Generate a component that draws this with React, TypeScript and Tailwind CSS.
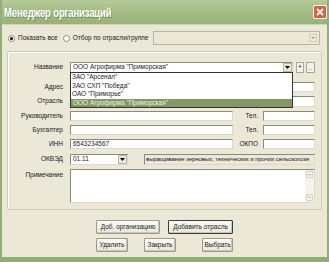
import React from "react";

const inp =
  "bg-white border border-t-[#8c8a80] border-l-[#8c8a80] border-r-[#dcd9cb] border-b-[#dcd9cb]";

function Arrow() {
  return (
    <div className="w-[9px] h-full bg-[#ece9d8] border border-[#b8b5a6] flex items-center justify-center">
      <svg width="5" height="3" viewBox="0 0 5 3">
        <path d="M0 0 H5 L2.5 3 Z" fill="#000" />
      </svg>
    </div>
  );
}

function Label({ children, w = "w-[55px]" }: { children: React.ReactNode; w?: string }) {
  return <div className={`${w} text-right shrink-0 leading-none`}>{children}</div>;
}

function Btn({ children, w, def }: { children: React.ReactNode; w: string; def?: boolean }) {
  return (
    <div
      className={`${w} h-[14px] flex items-center justify-center bg-gradient-to-b from-[#fbfaf6] to-[#e9e6da] rounded-[1px] ${
        def ? "border border-[#3c3c3c]" : "border border-[#9d9a8a]"
      } shadow-[inset_-1px_-1px_0_#c9c6b6]`}
    >
      {children}
    </div>
  );
}

export default function App() {
  return (
    <div
      className="w-[329px] h-[262px] bg-[#ebe8d8] flex flex-col border-x-2 border-b-[5px] border-[#93ad79] text-[6.5px] text-[#1a1a1a] overflow-hidden"
      style={{ fontFamily: '"Liberation Sans", Arial, sans-serif' }}
    >
      {/* title bar */}
      <div className="h-[25px] shrink-0 -mx-[2px] bg-gradient-to-b from-[#b7cb9a] via-[#a3bb84] to-[#99b279] flex items-center justify-between pl-[4px] pr-[2px] border-b border-[#c9d8b4]">
        <span
          className="text-white font-bold text-[13px] tracking-[-0.3px] leading-none origin-left scale-x-[0.74] whitespace-nowrap"
          style={{ textShadow: "1px 1px 0 #6f8a55", fontFamily: '"Liberation Sans", sans-serif' }}
        >
          Менеджер организаций
        </span>
        <div className="w-[14px] h-[14px] bg-[#d9603e] border border-white rounded-[2px] flex items-center justify-center">
          <svg width="8" height="8" viewBox="0 0 8 8">
            <path d="M1 1 L7 7 M7 1 L1 7" stroke="#fff" strokeWidth="1.8" />
          </svg>
        </div>
      </div>

      {/* radio row */}
      <div className="flex items-center h-[14px] mt-[6px] pl-[6px] pr-[7px]">
        <div className="w-[7px] h-[7px] rounded-full bg-white border border-[#8c8a80] flex items-center justify-center">
          <div className="w-[3px] h-[3px] rounded-full bg-black" />
        </div>
        <span className="ml-[3px] leading-none">Показать все</span>
        <div className="ml-[5px] w-[7px] h-[7px] rounded-full bg-white border border-[#8c8a80]" />
        <span className="ml-[3px] leading-none">Отбор по отрасли/группе</span>
        <div className="ml-[5px] flex-1 h-[14px] bg-[#ebe8d8] border border-[#b8b5a6] flex justify-end p-[2px]">
          <div className="w-[8px] h-full border border-[#cfccbd] flex items-center justify-center">
            <svg width="4" height="2" viewBox="0 0 4 2">
              <path d="M0 0 H4 L2 2 Z" fill="#a09d90" />
            </svg>
          </div>
        </div>
      </div>

      {/* group box */}
      <div className="relative mt-[6px] ml-[5px] mr-[5px] h-[159px] border border-[#d0cdbf] rounded-[2px] shadow-[inset_1px_1px_0_#fff] flex flex-col pt-[10px]">
        {/* Название */}
        <div className="flex items-center h-[11px]">
          <Label>Название</Label>
          <div className="ml-[7px] relative">
            <div className={`w-[223px] h-[11px] ${inp} flex items-center pl-[2px]`}>
              <span className="flex-1 leading-none">ООО Агрофирма "Приморская"</span>
              <Arrow />
            </div>
            {/* dropdown list */}
            <div className="absolute left-0 top-[10px] w-[223px] h-[36px] bg-white border border-[#333] z-10 flex flex-col">
              <div className="h-[9px] flex items-center pl-[1px] leading-none">ЗАО "Арсенал"</div>
              <div className="h-[8px] flex items-center pl-[1px] leading-none">ЗАО СХП "Победа"</div>
              <div className="h-[9px] flex items-center pl-[1px] leading-none">ОАО "Приморье"</div>
              <div className="h-[8px] flex items-center pl-[2px] leading-none bg-[#839767] text-[#eef1e4]">
                ООО Агрофирма "Приморская"
              </div>
            </div>
          </div>
          <div className="ml-[3px] w-[8px] h-[11px] bg-[#f2f1ea] border border-[#a9a697] flex items-center justify-center leading-none">
            +
          </div>
          <div className="ml-[2px] w-[9px] h-[11px] bg-[#f2f1ea] border border-[#a9a697] flex items-end justify-center leading-none pb-[1px] text-[5px]">
            ...
          </div>
        </div>

        {/* Адрес */}
        <div className="flex items-center h-[10px] mt-[9px]">
          <Label>Адрес</Label>
          <div className={`ml-[7px] w-[245px] h-[10px] ${inp}`} />
        </div>
        {/* Отрасль */}
        <div className="flex items-center h-[11px] mt-[4px]">
          <Label>Отрасль</Label>
          <div className={`ml-[7px] w-[245px] h-[11px] ${inp}`} />
        </div>
        {/* Руководитель */}
        <div className="flex items-center h-[10px] mt-[4px]">
          <Label>Руководитель</Label>
          <div className={`ml-[7px] w-[163px] h-[10px] ${inp}`} />
          <div className="w-[25px] text-right leading-none">Тел.</div>
          <div className={`ml-[5px] w-[52px] h-[10px] ${inp}`} />
        </div>
        {/* Бухгалтер */}
        <div className="flex items-center h-[10px] mt-[4px]">
          <Label>Бухгалтер</Label>
          <div className={`ml-[7px] w-[163px] h-[10px] ${inp}`} />
          <div className="w-[25px] text-right leading-none">Тел.</div>
          <div className={`ml-[5px] w-[52px] h-[10px] ${inp}`} />
        </div>
        {/* ИНН */}
        <div className="flex items-center h-[10px] mt-[4px]">
          <Label>ИНН</Label>
          <div className={`ml-[7px] w-[163px] h-[10px] ${inp} flex items-center pl-[2px] leading-none`}>
            6543234567
          </div>
          <div className="w-[25px] text-right leading-none">ОКПО</div>
          <div className={`ml-[5px] w-[52px] h-[10px] ${inp}`} />
        </div>
        {/* ОКВЭД */}
        <div className="flex items-center h-[11px] mt-[5px]">
          <Label>ОКВЭД</Label>
          <div className={`ml-[7px] w-[58px] h-[11px] ${inp} flex items-center pl-[2px]`}>
            <span className="flex-1 leading-none">01.11</span>
            <Arrow />
          </div>
          <div className="ml-[16px] w-[171px] h-[11px] bg-[#ebe8d8] border border-t-[#8c8a80] border-l-[#8c8a80] border-r-[#dcd9cb] border-b-[#dcd9cb] flex items-center pl-[1px] leading-none whitespace-nowrap overflow-hidden text-[6.2px] tracking-[-0.15px]">
            выращивание зерновых, технических и прочих сельскохозя
          </div>
        </div>
        {/* Примечание */}
        <div className="flex items-start mt-[4px]">
          <Label>
            <div className="pt-[3px]">Примечание</div>
          </Label>
          <div className={`ml-[7px] w-[245px] h-[34px] ${inp} flex justify-end`}>
            <div className="w-[9px] h-full bg-[#f4f3ee] flex flex-col justify-between items-center py-[1px]">
              <svg width="7" height="7" viewBox="0 0 7 7">
                <rect x="0.5" y="0.5" width="6" height="6" fill="#f4f3ee" stroke="#d6d3c5" />
                <path d="M2 4.5 L3.5 3 L5 4.5" stroke="#b0ad9f" fill="none" />
              </svg>
              <svg width="7" height="7" viewBox="0 0 7 7">
                <rect x="0.5" y="0.5" width="6" height="6" fill="#f4f3ee" stroke="#d6d3c5" />
                <path d="M2 2.5 L3.5 4 L5 2.5" stroke="#b0ad9f" fill="none" />
              </svg>
            </div>
          </div>
        </div>
      </div>

      {/* buttons */}
      <div className="flex flex-col mt-[10px] pl-[94px]">
        <div className="flex">
          <Btn w="w-[64px]">Доб. организацию</Btn>
          <div className="ml-[8px]">
            <Btn w="w-[65px]" def>
              Добавить отрасль
            </Btn>
          </div>
        </div>
        <div className="flex mt-[4px]">
          <Btn w="w-[32px]">Удалить</Btn>
          <div className="ml-[16px]">
            <Btn w="w-[32px]">Закрыть</Btn>
          </div>
          <div className="ml-[26px]">
            <Btn w="w-[31px]">Выбрать</Btn>
          </div>
        </div>
      </div>
    </div>
  );
}
